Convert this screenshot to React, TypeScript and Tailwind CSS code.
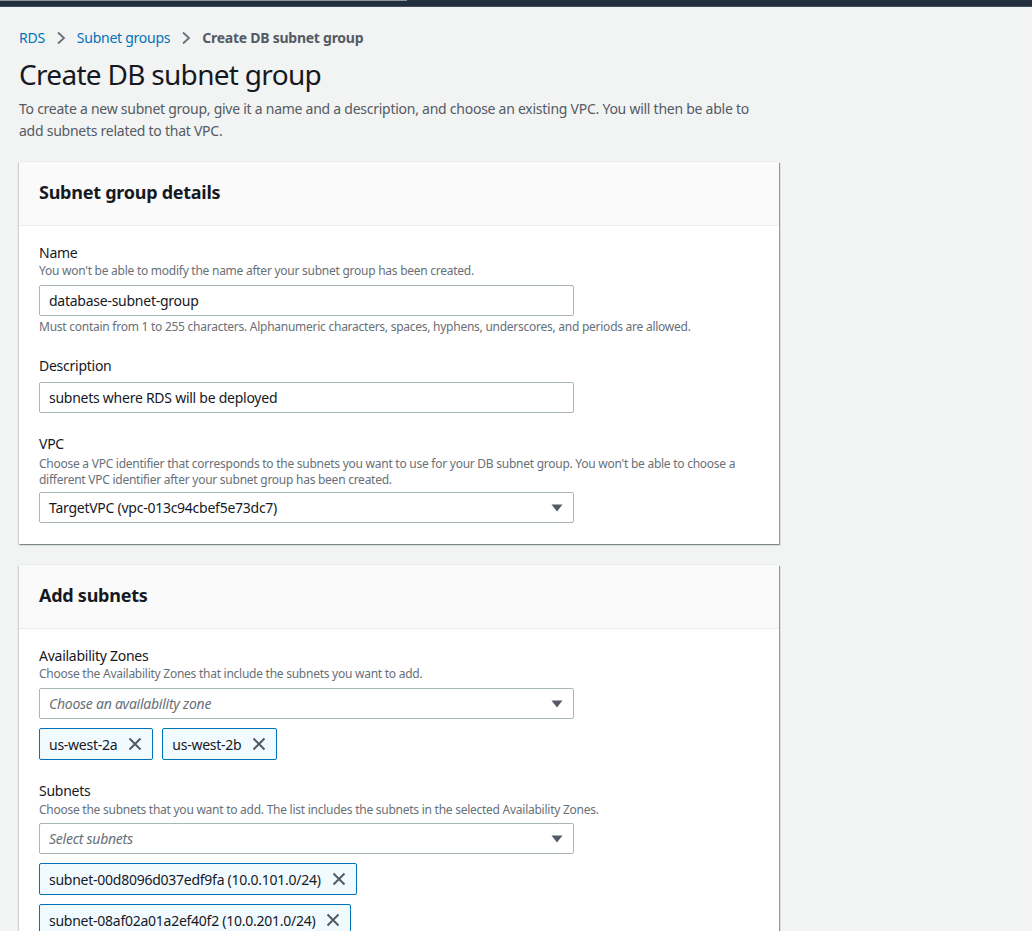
import React from "react";

const F = { fontFamily: '"Noto Sans", "Open Sans", Arial, sans-serif', letterSpacing: "-0.016em" };

function Caret() {
  return (
    <svg width="12" height="8" viewBox="0 0 12 8" className="shrink-0">
      <path d="M0.5 0.5 H11.5 L6 7.5 Z" fill="#545b64" />
    </svg>
  );
}

function XIcon() {
  return (
    <svg width="16" height="16" viewBox="0 0 16 16" className="shrink-0">
      <path d="M2.5 2.5 L13.5 13.5 M13.5 2.5 L2.5 13.5" stroke="#545b64" strokeWidth="2" fill="none" />
    </svg>
  );
}

function Input({ value }: { value: string }) {
  return (
    <div className="w-[535px] h-[31px] border border-[#aab7b8] rounded-[2px] bg-white flex items-center px-[9px] text-[14px] text-[#16191f]">
      {value}
    </div>
  );
}

function Select({ value, placeholder }: { value: string; placeholder?: boolean }) {
  return (
    <div className="w-[535px] h-[31px] border border-[#aab7b8] rounded-[2px] bg-white flex items-center justify-between pl-[9px] pr-[10px] text-[14px]">
      <span className={placeholder ? "italic text-[#687078]" : "text-[#16191f]"}>{value}</span>
      <Caret />
    </div>
  );
}

function Tag({ label }: { label: string }) {
  return (
    <div className="h-[32px] border border-[#0073bb] rounded-[2px] bg-[#f1faff] inline-flex items-center gap-[10px] pl-[9px] pr-[9px] text-[14px] text-[#16191f]">
      <span>{label}</span>
      <XIcon />
    </div>
  );
}

function Label({ children }: { children: React.ReactNode }) {
  return <div className="text-[14px] leading-[20px] text-[#16191f]">{children}</div>;
}

function Help({ children }: { children: React.ReactNode }) {
  return <div className="text-[12px] leading-[16px] text-[#687078]">{children}</div>;
}

function Card({ title, children }: { title: string; children: React.ReactNode }) {
  return (
    <div className="w-[760px] bg-white shadow-[0_-1px_0_0_#eaeded,1px_1px_1px_0_rgba(0,28,36,0.3),1px_1px_1px_0_rgba(0,28,36,0.15),-1px_1px_1px_0_rgba(0,28,36,0.15)]">
      <div className="h-[64px] bg-[#fafafa] border-b border-[#eaeded] px-[20px] pt-[16px]">
        <h2 className="text-[18px] leading-[28px] font-bold text-[#16191f]">{title}</h2>
      </div>
      <div className="px-[20px] pt-[17px] pb-[21px]">{children}</div>
    </div>
  );
}

export default function App() {
  return (
    <div style={F} className="min-h-[931px] bg-[#f2f3f3] overflow-hidden">
      <div className="h-[7px] bg-[#232f3e] border-b border-[#414d5c] relative">
        <div className="absolute left-0 top-0 w-[407px] h-[1px] bg-[#8d9696]" />
      </div>
      <div className="pl-[19px] pt-[21px]">
        <nav className="flex items-center gap-[10px] text-[14px] leading-[20px]">
          <span className="text-[#0073bb]">RDS</span>
          <svg width="12" height="14" viewBox="0 0 12 14"><path d="M3 1.5 L9 7 L3 12.5" stroke="#687078" strokeWidth="1.8" fill="none" /></svg>
          <span className="text-[#0073bb]">Subnet groups</span>
          <svg width="12" height="14" viewBox="0 0 12 14"><path d="M3 1.5 L9 7 L3 12.5" stroke="#687078" strokeWidth="1.8" fill="none" /></svg>
          <span className="text-[#545b64] font-bold">Create DB subnet group</span>
        </nav>
        <h1 className="mt-[9px] text-[28px] leading-[34px] tracking-[-0.025em] text-[#16191f] font-normal">Create DB subnet group</h1>
        <p className="mt-[7px] w-[745px] text-[14px] leading-[22px] text-[#545b64]">
          To create a new subnet group, give it a name and a description, and choose an existing VPC. You will then be able to add subnets related to that VPC.
        </p>

        <div className="mt-[20px] flex flex-col gap-[21px]">
          <Card title="Subnet group details">
            <div className="flex flex-col">
              <Label>Name</Label>
              <Help>You won't be able to modify the name after your subnet group has been created.</Help>
              <div className="mt-[6px]"><Input value="database-subnet-group" /></div>
              <div className="mt-[3px]"><Help>Must contain from 1 to 255 characters. Alphanumeric characters, spaces, hyphens, underscores, and periods are allowed.</Help></div>

              <div className="mt-[21px]"><Label>Description</Label></div>
              <div className="mt-[6px]"><Input value="subnets where RDS will be deployed" /></div>

              <div className="mt-[21px]"><Label>VPC</Label></div>
              <div className="w-[720px] mt-[2px]"><Help>Choose a VPC identifier that corresponds to the subnets you want to use for your DB subnet group. You won't be able to choose a different VPC identifier after your subnet group has been created.</Help></div>
              <div className="mt-[4px]"><Select value="TargetVPC (vpc-013c94cbef5e73dc7)" /></div>
            </div>
          </Card>

          <Card title="Add subnets">
            <div className="flex flex-col">
              <Label>Availability Zones</Label>
              <Help>Choose the Availability Zones that include the subnets you want to add.</Help>
              <div className="mt-[6px]"><Select value="Choose an availability zone" placeholder /></div>
              <div className="mt-[9px] flex gap-[9px]">
                <Tag label="us-west-2a" />
                <Tag label="us-west-2b" />
              </div>

              <div className="mt-[21px]"><Label>Subnets</Label></div>
              <div className="mt-[1px]"><Help>Choose the subnets that you want to add. The list includes the subnets in the selected Availability Zones.</Help></div>
              <div className="mt-[5px]"><Select value="Select subnets" placeholder /></div>
              <div className="mt-[9px] flex flex-col items-start gap-[9px]">
                <Tag label="subnet-00d8096d037edf9fa (10.0.101.0/24)" />
                <Tag label="subnet-08af02a01a2ef40f2 (10.0.201.0/24)" />
              </div>
            </div>
          </Card>
        </div>
      </div>
    </div>
  );
}
